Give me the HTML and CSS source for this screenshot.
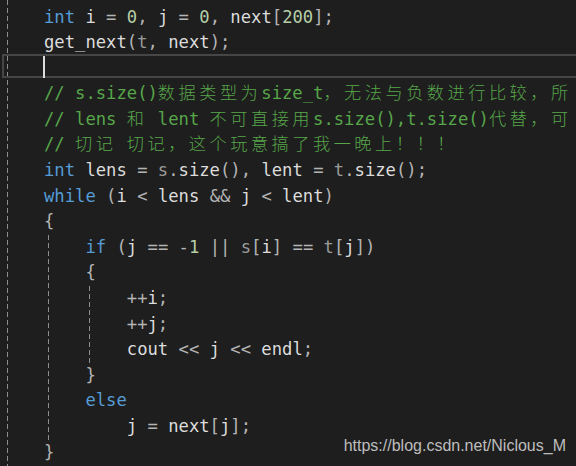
FILE: index.html
```html
<!DOCTYPE html>
<html lang="zh-CN">
<head>
<meta charset="utf-8">
<title>code</title>
<link rel="stylesheet" href="styles.css">
</head>
<body>
<div class="editor">
  <div class="guide guide-outer"></div>
  <div class="guide guide-while"></div>
  <div class="guide guide-if"></div>

  <div class="line"><span class="kw">int</span> i <span class="p">=</span> <span class="num">0</span><span class="p">,</span> j <span class="p">=</span> <span class="num">0</span><span class="p">,</span> next<span class="p">[</span><span class="num">200</span><span class="p">];</span></div>
  <div class="line">get_next<span class="p">(</span><span class="par">t</span><span class="p">,</span> next<span class="p">);</span></div>
  <div class="line current"><span class="caret"></span></div>
  <div class="line cm">// s.size()<span class="cjk">数据类型为</span>size_t<span class="cjk">，无法与负数进行比较，所</span></div>
  <div class="line cm">// lens <span class="cjk">和</span> lent <span class="cjk">不可直接用</span>s.size(),t.size()<span class="cjk">代替，可</span></div>
  <div class="line cm">// <span class="cjk">切记</span> <span class="cjk">切记，这个玩意搞了我一晚上！！！</span></div>
  <div class="line"><span class="kw">int</span> lens <span class="p">=</span> <span class="par">s</span><span class="p">.</span>size<span class="p">(),</span> lent <span class="p">=</span> <span class="par">t</span><span class="p">.</span>size<span class="p">();</span></div>
  <div class="line"><span class="kw">while</span> <span class="p">(</span>i <span class="p">&lt;</span> lens <span class="p">&amp;&amp;</span> j <span class="p">&lt;</span> lent<span class="p">)</span></div>
  <div class="line"><span class="p">{</span></div>
  <div class="line">    <span class="kw">if</span> <span class="p">(</span>j <span class="p">==</span> <span class="p">-</span><span class="num">1</span> <span class="p">||</span> <span class="par">s</span><span class="p">[</span>i<span class="p">]</span> <span class="p">==</span> <span class="par">t</span><span class="p">[</span>j<span class="p">])</span></div>
  <div class="line">    <span class="p">{</span></div>
  <div class="line">        <span class="p">++</span>i<span class="p">;</span></div>
  <div class="line">        <span class="p">++</span>j<span class="p">;</span></div>
  <div class="line">        cout <span class="p">&lt;&lt;</span> j <span class="p">&lt;&lt;</span> endl<span class="p">;</span></div>
  <div class="line">    <span class="p">}</span></div>
  <div class="line">    <span class="kw">else</span></div>
  <div class="line">        j <span class="p">=</span> next<span class="p">[</span>j<span class="p">];</span></div>
  <div class="line"><span class="p">}</span></div>

  <div class="watermark">https://blog.csdn.net/Niclous_M</div>
</div>
</body>
</html>
```

FILE: styles.css
```css
html, body {
  margin: 0;
  padding: 0;
  background: #1e1e1e;
  overflow: hidden;
}

.editor {
  position: relative;
  width: 576px;
  height: 466px;
  overflow: hidden;
  box-sizing: border-box;
  padding-top: 4.5px;
  background: #1e1e1e;
  font-family: "DejaVu Sans Mono", "Liberation Mono", monospace;
  font-size: 17.2px;
  color: #dcdcdc;
}

.line {
  height: 25.6px;
  line-height: 25.6px;
  padding-left: 44px;
  white-space: pre;
}

.kw { color: #569cd6; }
.num { color: #b5cea8; }
.p { color: #b4b4b4; }
.par { color: #9a9a9a; }
.cm { color: #57a64a; }

.cjk {
  font-family: "Noto Sans CJK SC", sans-serif;
  font-weight: 300;
  font-size: 17.2px;
  letter-spacing: 3.5px;
  line-height: 17px;
}

.current {
  position: relative;
}

.current::before {
  content: "";
  position: absolute;
  left: 2px;
  right: -10px;
  top: -1.7px;
  height: 24px;
  box-sizing: border-box;
  border: 2px solid #464646;
}

.caret {
  position: absolute;
  left: 43px;
  top: 0;
  width: 2px;
  height: 22px;
  background: #dcdcdc;
}

.guide {
  position: absolute;
  width: 1px;
  background: repeating-linear-gradient(to bottom, #8e8e8e 0 5px, transparent 5px 8px);
}

.guide-outer {
  left: 7px;
  top: 0;
  height: 466px;
}

.guide-while {
  left: 48px;
  top: 235px;
  height: 205px;
}

.guide-if {
  left: 89px;
  top: 286px;
  height: 77px;
}

.watermark {
  position: absolute;
  right: 10px;
  top: 437px;
  font-family: "Liberation Sans", Arial, sans-serif;
  font-size: 16px;
  line-height: 18px;
  color: #bdbdbd;
  white-space: nowrap;
}
```
